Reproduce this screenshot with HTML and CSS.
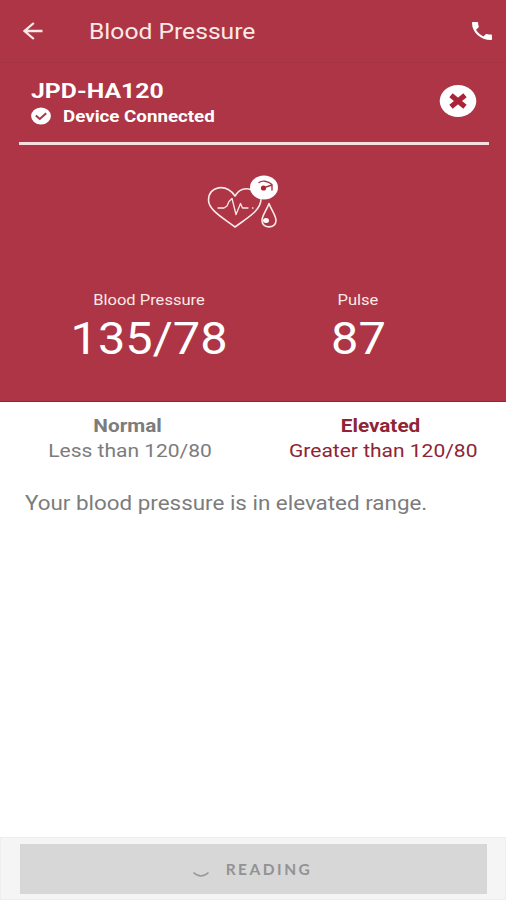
FILE: index.html
```html
<!DOCTYPE html>
<html lang="en">
<head>
<meta charset="utf-8">
<title>Blood Pressure</title>
<link rel="stylesheet" href="styles.css">
</head>
<body>
<div class="screen">
  <header class="bar">
    <svg class="back" viewBox="0 0 20 18" fill="none" stroke="#fbe9e7" stroke-width="2.3"><path d="M19.5 9H2M10.8 1L1.6 9l9.2 8"/></svg>
    <h1 class="title wide">Blood Pressure</h1>
    <svg class="call" viewBox="3 3 18 18" preserveAspectRatio="none"><path fill="#fff" d="M6.62 10.79c1.44 2.83 3.76 5.14 6.59 6.59l2.2-2.2c.27-.27.67-.36 1.02-.24 1.12.37 2.33.57 3.57.57.55 0 1 .45 1 1V20c0 .55-.45 1-1 1-9.39 0-17-7.61-17-17 0-.55.45-1 1-1h3.5c.55 0 1 .45 1 1 0 1.25.2 2.45.57 3.57.11.35.03.74-.25 1.02l-2.2 2.2z"/></svg>
  </header>
  <section class="hero">
    <div class="device">
      <div class="info">
        <div class="name wide">JPD-HA120</div>
        <div class="status">
          <svg class="check" viewBox="0 0 20 18"><ellipse cx="10" cy="9" rx="9.9" ry="8.6" fill="#fff"/><path d="M4.800 8.600l4 3.400 6.400-5.800" fill="none" stroke="#a93545" stroke-width="2"/></svg>
          <span class="connected wide">Device Connected</span>
        </div>
      </div>
      <svg class="close" viewBox="0 0 38 34"><ellipse cx="19" cy="17" rx="18.3" ry="16" fill="#fff"/><path d="M12 11.2l14 11.600M26 11.2l-14 11.600" stroke="#a92436" stroke-width="5.2"/></svg>
    </div>
    <svg class="emblem" viewBox="0 0 74 56" fill="none" stroke="#fbe9e7" stroke-width="1.6" stroke-linecap="round" stroke-linejoin="round">
      <path d="M29 52C17 43 2.500 35 2.500 25C2.500 11 20 8 29 21C33 14 38 12.500 45 14.500M55 24.500C54.500 36 41 43 29 52"/>
      <path stroke-width="1.3" d="M12 33h6l3-2 2-4.500 3-3 4 16 4.500-11 2 4.500h5.500M46.500 33h.6"/>
      <ellipse cx="58" cy="12.500" rx="14" ry="12" fill="#fff" stroke="none"/>
      <path stroke="#a93545" stroke-width="1.400" d="M53 7.500c3-2.500 9-1.500 13 2v5.500M60 12l6-2"/>
      <circle cx="57.500" cy="13" r="2.600" fill="#a92436" stroke="none"/>
      <path d="M63 28.500c-2 6-7 12-7 17 0 8.500 14 8.500 14 0 0-5-5-11-7-17z"/>
      <ellipse cx="60" cy="45.500" rx="3" ry="2.500" fill="#fff" stroke="none"/>
    </svg>
    <div class="readings">
      <div class="reading">
        <span class="label wide">Blood Pressure</span>
        <span class="value wide">135/78</span>
      </div>
      <div class="reading pulse">
        <span class="label wide">Pulse</span>
        <span class="value wide">87</span>
      </div>
    </div>
  </section>
  <main class="content">
    <div class="ranges">
      <div class="range"><b class="wide">Normal</b><span class="limit wide">Less than 120/80</span></div>
      <div class="range high"><b class="wide">Elevated</b><span class="limit wide">Greater than 120/80</span></div>
    </div>
    <p class="message wide">Your blood pressure is in elevated range.</p>
  </main>
  <footer class="footer">
    <button class="button" type="button">
      <svg class="spinner" viewBox="0 0 18 7" fill="none" stroke="#999" stroke-width="1.600"><path d="M1.500 1.500q7.500 7 15 0"/></svg>
      <span class="reading-text">READING</span>
    </button>
  </footer>
</div>
</body>
</html>
```

FILE: styles.css
```css
* { box-sizing: border-box; }
body { margin: 0; font-family: Roboto, "Liberation Sans", sans-serif; background: #fff; }
.screen { width: 506px; height: 900px; display: flex; flex-direction: column; overflow: hidden; }
.wide { display: block; width: max-content; white-space: nowrap; transform: scaleX(1.17); }
.bar { height: 62px; flex: none; display: flex; align-items: center; padding: 0 14px 0 23px; background: #ad3545; color: #fbe9e7; }
.back { width: 20px; height: 18px; }
.title { margin: 1px auto 0 46px; font-size: 22px; line-height: 26px; font-weight: 400; transform-origin: left; transform: scaleX(1.12); }
.call { width: 20px; height: 18px; }
.hero { height: 340px; flex: none; display: flex; flex-direction: column; background: #ad3545; border-top: 1px solid #a73441; border-bottom: 1px solid #a01f32; color: #fff; }
.device { display: flex; justify-content: space-between; height: 82px; margin: 0 17px 0 19px; padding: 15px 10px 0 12px; border-bottom: 3px solid #f6dfe1; }
.name { font-size: 21px; line-height: 26px; font-weight: 700; transform-origin: left; transform: scaleX(1.18); }
.status { display: flex; align-items: center; height: 24px; }
.check { width: 20px; height: 18px; margin-top: -1px; }
.connected { margin-left: 12px; font-size: 16px; font-weight: 700; transform-origin: left; }
.close { width: 38px; height: 34px; margin: 6px 2px 0 0; }
.emblem { width: 74px; height: 56px; margin: 30px 0 0 206px; }
.readings { display: flex; margin-top: 60px; }
.reading { width: 298px; display: flex; flex-direction: column; align-items: center; }
.pulse { width: 120px; }
.label { font-size: 14.5px; line-height: 20px; color: #fbe9e7; transform: scaleX(1.14); }
.value { margin-top: 3px; font-size: 43.5px; line-height: 52px; transform: scaleX(1.12); }
.content { flex: 1; color: #7c7c7c; padding-top: 12px; }
.ranges { display: flex; }
.range { width: 260px; display: flex; flex-direction: column; align-items: center; font-size: 19px; line-height: 24px; }
.range b { font-size: 18.5px; margin-right: 5px; transform: scaleX(1.12); }
.limit { margin-top: 1px; transform: scaleX(1.105); }
.high { width: 246px; color: #8f2437; }
.message { margin: 26px 0 0 25px; font-size: 20px; line-height: 28px; transform-origin: left; transform: scaleX(1.12); }
.footer { height: 63px; flex: none; padding: 6px 18px 6px 19px; background: #f5f5f5; border: 1px solid #eee; }
.button { width: 100%; height: 50px; display: flex; align-items: center; justify-content: center; border: 0; padding: 0 3px 0 0; background: #d7d7d7; color: #929292; }
.spinner { width: 18px; height: 7px; margin: 10px 16px 0 0; }
.reading-text { font-family: Lato, sans-serif; font-size: 15.500px; font-weight: 700; letter-spacing: 2.5px; }
```
